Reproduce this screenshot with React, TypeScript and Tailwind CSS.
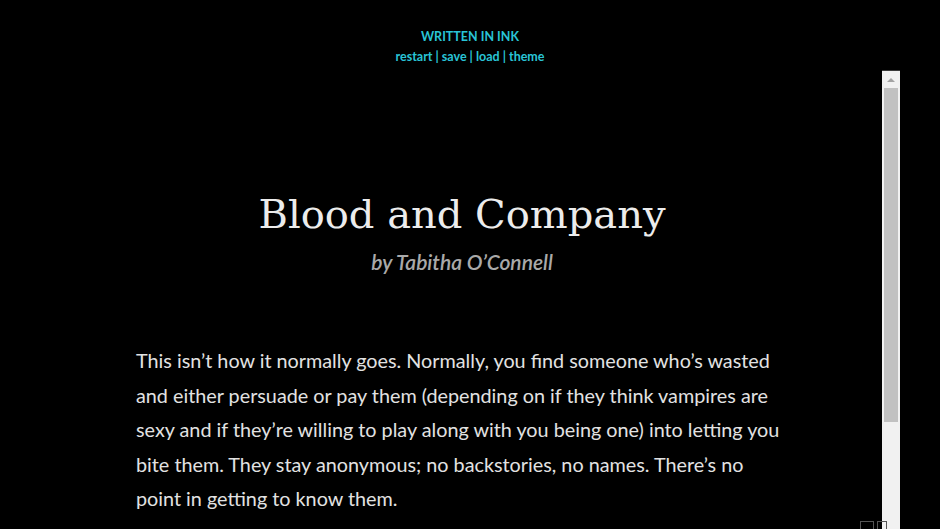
export default function App() {
  return (
    <div className="relative h-[529px] w-[940px] overflow-hidden bg-black font-['Lato',sans-serif]">
      {/* header */}
      <div className="pt-[29px] text-center font-bold text-[#29c4d6]">
        <div className="text-[12.5px] leading-[16px]">WRITTEN IN INK</div>
        <div className="mt-[4px] text-[12.5px] leading-[16px]">
          <span>restart</span> | <span>save</span> | <span>load</span> | <span>theme</span>
        </div>
      </div>

      {/* story frame */}
      <div className="mt-[5px] flex h-[459px]">
        <div className="w-[882px] pl-[136px] pt-[120px]">
          <div className="w-[652px]">
            <h1 className="text-center font-['DejaVu_Serif',serif] text-[40px] leading-[48px] text-[#ececec]">
              Blood and Company
            </h1>
            <h2 className="mt-[10px] text-center text-[21px] font-semibold italic leading-[28px] text-[#a9a9a9]">
              by Tabitha O’Connell
            </h2>
            <p className="mt-[67px] text-[19.8px] leading-[34.6px] text-[#e2e2e2]">
              This isn’t how it normally goes. Normally, you find someone who’s wasted and either persuade or pay them (depending on if they think vampires are sexy and if they’re willing to play along with you being one) into letting you bite them. They stay anonymous; no backstories, no names. There’s no point in getting to know them.
            </p>
          </div>
        </div>

        {/* scrollbar */}
        <div className="flex w-[18px] flex-col border-t border-[#3a3a3a] bg-[#f1f1f1]">
          <div className="flex h-[17px] items-center justify-center">
            <div className="h-0 w-0 border-x-[4px] border-b-[4px] border-x-transparent border-b-[#a3a3a3]" />
          </div>
          <div className="mx-[2px] h-[334px] bg-[#c1c1c1]" />
        </div>
      </div>

      {/* corner control */}
      <div className="absolute bottom-[-4px] left-[860px] flex gap-[3px]">
        <div className="h-[12px] w-[14px] border border-[#555]" />
        <div className="h-[12px] w-[10px] border border-[#555]" />
      </div>
    </div>
  )
}
